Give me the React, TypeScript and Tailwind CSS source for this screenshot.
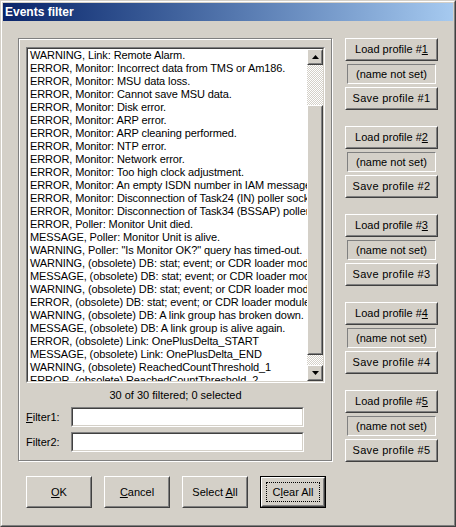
import React from 'react';

const LINES = [
  'WARNING, Link: Remote Alarm.',
  'ERROR, Monitor: Incorrect data from TMS or Am186.',
  'ERROR, Monitor: MSU data loss.',
  'ERROR, Monitor: Cannot save MSU data.',
  'ERROR, Monitor: Disk error.',
  'ERROR, Monitor: ARP error.',
  'ERROR, Monitor: ARP cleaning performed.',
  'ERROR, Monitor: NTP error.',
  'ERROR, Monitor: Network error.',
  'ERROR, Monitor: Too high clock adjustment.',
  'ERROR, Monitor: An empty ISDN number in IAM message',
  'ERROR, Monitor: Disconnection of Task24 (IN) poller socket',
  'ERROR, Monitor: Disconnection of Task34 (BSSAP) poller socket',
  'ERROR, Poller: Monitor Unit died.',
  'MESSAGE, Poller: Monitor Unit is alive.',
  'WARNING, Poller: "Is Monitor OK?" query has timed-out.',
  'WARNING, (obsolete) DB: stat; event; or CDR loader module',
  'MESSAGE, (obsolete) DB: stat; event; or CDR loader module',
  'WARNING, (obsolete) DB: stat; event; or CDR loader module',
  'ERROR, (obsolete) DB: stat; event; or CDR loader module',
  'WARNING, (obsolete) DB: A link group has broken down.',
  'MESSAGE, (obsolete) DB: A link group is alive again.',
  'ERROR, (obsolete) Link: OnePlusDelta_START',
  'MESSAGE, (obsolete) Link: OnePlusDelta_END',
  'WARNING, (obsolete) ReachedCountThreshold_1',
  'ERROR, (obsolete) ReachedCountThreshold_2',
];

function Raised({ children, className = '' }: { children?: React.ReactNode; className?: string }) {
  return (
    <div className={`border border-t-white border-l-white border-b-[#404040] border-r-[#404040] bg-[#d4d0c8] ${className}`}>
      <div className="h-full w-full border border-t-[#d4d0c8] border-l-[#d4d0c8] border-b-[#808080] border-r-[#808080] flex items-center justify-center">
        {children}
      </div>
    </div>
  );
}

function Sunken({ children, className = '' }: { children?: React.ReactNode; className?: string }) {
  return (
    <div className={`border border-t-[#808080] border-l-[#808080] border-b-white border-r-white ${className}`}>
      <div className="h-full w-full border border-t-[#404040] border-l-[#404040] border-b-[#d4d0c8] border-r-[#d4d0c8] bg-white overflow-hidden">
        {children}
      </div>
    </div>
  );
}

function Arrow({ up }: { up?: boolean }) {
  return (
    <svg width="7" height="4" viewBox="0 0 7 4">
      {up ? <polygon points="3.5,0 7,4 0,4" fill="#000" /> : <polygon points="0,0 7,0 3.5,4" fill="#000" />}
    </svg>
  );
}

function Profile({ n }: { n: number }) {
  return (
    <div className="flex flex-col">
      <Raised className="h-[23px]">
        <span>
          Load profile #<u>{n}</u>
        </span>
      </Raised>
      <div className="mt-[3px] mx-[2px] h-[20px] border border-t-[#808080] border-l-[#808080] border-b-white border-r-white flex items-center justify-center">
        (name not set)
      </div>
      <Raised className="mt-[3px] h-[23px]">
        <span className="tracking-[0.3px]">Save profile #{n}</span>
      </Raised>
    </div>
  );
}

export default function App() {
  return (
    <div className="w-[456px] h-[527px] bg-[#d4d0c8] border border-t-[#d4d0c8] border-l-[#d4d0c8] border-b-[#404040] border-r-[#404040] font-['Liberation_Sans',Arial,sans-serif] text-[11px] leading-[13px] text-black select-none">
      <div className="h-full border border-t-white border-l-white border-b-[#808080] border-r-[#808080] p-px flex flex-col">
        {/* Title bar */}
        <div className="h-[18px] shrink-0 bg-gradient-to-r from-[#0a246a] to-[#a6caf0] text-white font-bold text-[12px] pl-[2px] flex items-center">
          Events filter
        </div>

        {/* Client area */}
        <div className="flex-1 pl-[15px] pt-[17px]">
          <div className="flex">
            {/* Group box */}
            <div className="w-[314px] h-[423px] border border-[#808080] shadow-[inset_1px_1px_0_#fff,1px_1px_0_#fff] pl-[7px] pt-[8px]">
              <Sunken className="w-[299px] h-[336px]">
                <div className="flex h-full">
                  <div className="flex-1 overflow-hidden pl-[2px] whitespace-nowrap tracking-[-0.1px]">
                    {LINES.map((l, i) => (
                      <div key={i} className="h-[13px]">
                        {l}
                      </div>
                    ))}
                  </div>
                  {/* Scrollbar */}
                  <div className="w-[16px] flex flex-col shrink-0">
                    <Raised className="h-[16px]">
                      <Arrow up />
                    </Raised>
                    <div className="h-[40px] bg-[conic-gradient(#d4d0c8_0_25%,#fff_0_50%,#d4d0c8_0_75%,#fff_0)] bg-[length:2px_2px]" />
                    <Raised className="h-[250px]" />
                    <div className="flex-1 bg-[conic-gradient(#d4d0c8_0_25%,#fff_0_50%,#d4d0c8_0_75%,#fff_0)] bg-[length:2px_2px]" />
                    <Raised className="h-[16px]">
                      <Arrow />
                    </Raised>
                  </div>
                </div>
              </Sunken>

              <div className="mt-[6px] w-[299px] text-center">30 of 30 filtered; 0 selected</div>

              <div className="mt-[5px] flex items-center">
                <span className="w-[45px]">
                  <u>F</u>ilter1:
                </span>
                <Sunken className="w-[233px] h-[20px]" />
              </div>
              <div className="mt-[5px] flex items-center">
                <span className="w-[45px]">Filter2:</span>
                <Sunken className="w-[233px] h-[20px]" />
              </div>
            </div>

            {/* Profiles */}
            <div className="ml-[13px] w-[93px] flex flex-col gap-[16px]">
              {[1, 2, 3, 4, 5].map((n) => (
                <Profile key={n} n={n} />
              ))}
            </div>
          </div>

          {/* Bottom buttons */}
          <div className="mt-[14px] pl-[8px] flex gap-[12px]">
            <Raised className="w-[66px] h-[32px]">
              <span>
                <u>O</u>K
              </span>
            </Raised>
            <Raised className="w-[66px] h-[32px]">
              <span>
                <u>C</u>ancel
              </span>
            </Raised>
            <Raised className="w-[66px] h-[32px]">
              <span>
                Select <u>A</u>ll
              </span>
            </Raised>
            <div className="w-[66px] h-[32px] border border-black">
              <Raised className="h-full w-full">
                <div className="w-[54px] h-[20px] border border-dotted border-black flex items-center justify-center">
                  <span>
                    C<u>l</u>ear All
                  </span>
                </div>
              </Raised>
            </div>
          </div>
        </div>
      </div>
    </div>
  );
}
